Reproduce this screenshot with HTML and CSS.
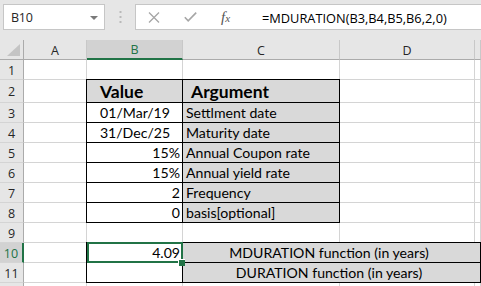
FILE: index.html
```html
<!DOCTYPE html>
<html>
<head>
<meta charset="utf-8">
<link rel="stylesheet" href="styles.css">
</head>
<body>
<div class="fbar">
  <div class="namebox">
    <span class="nb-text">B10</span>
    <svg class="nb-arrow" width="8" height="4" viewBox="0 0 8 4"><path d="M0 0H8L4 4Z" fill="#7a7a7a"/></svg>
  </div>
  <div class="dots">
    <svg width="3" height="12" viewBox="0 0 3 12"><rect x="0.5" y="0" width="2" height="2" fill="#b9b9b9"/><rect x="0.5" y="5" width="2" height="2" fill="#b9b9b9"/><rect x="0.5" y="10" width="2" height="2" fill="#b9b9b9"/></svg>
  </div>
  <div class="formula">
    <div class="ficons">
      <svg class="ic-x" width="12" height="11" viewBox="0 0 12 11"><path d="M1 0.5L11 10.5M11 0.5L1 10.5" stroke="#a6a6a6" stroke-width="1.3" fill="none"/></svg>
      <svg class="ic-check" width="13" height="10" viewBox="0 0 13 10"><path d="M0.8 5.2L4.2 8.8L12.2 0.6" stroke="#a6a6a6" stroke-width="1.6" fill="none"/></svg>
      <span class="ic-fx"><i>f</i><i class="fx-x">x</i></span>
    </div>
    <div class="ftext">=MDURATION(B3,B4,B5,B6,2,0)</div>
  </div>
</div>
<div class="sheet">
  <div class="ch corner"><svg width="13" height="12" viewBox="0 0 13 12"><path d="M13 0V12H0Z" fill="#c4c4c4"/></svg></div>
  <div class="ch">A</div>
  <div class="ch chsel">B</div>
  <div class="ch">C</div>
  <div class="ch">D</div>
  <div class="ch"></div>

  <div class="rh">1</div><div class="c"></div><div class="c"></div><div class="c"></div><div class="c"></div><div class="c"></div>

  <div class="rh">2</div><div class="c"></div>
  <div class="c t g hd hv">Value</div>
  <div class="c t g hd ha">Argument</div>
  <div class="c"></div><div class="c"></div>

  <div class="rh">3</div><div class="c"></div>
  <div class="c t ctr">01/Mar/19</div>
  <div class="c t g lft">Settlment date</div>
  <div class="c"></div><div class="c"></div>

  <div class="rh">4</div><div class="c"></div>
  <div class="c t ctr">31/Dec/25</div>
  <div class="c t g lft">Maturity date</div>
  <div class="c"></div><div class="c"></div>

  <div class="rh">5</div><div class="c"></div>
  <div class="c t rgt">15%</div>
  <div class="c t g lft">Annual Coupon rate</div>
  <div class="c"></div><div class="c"></div>

  <div class="rh">6</div><div class="c"></div>
  <div class="c t rgt">15%</div>
  <div class="c t g lft">Annual yield rate</div>
  <div class="c"></div><div class="c"></div>

  <div class="rh">7</div><div class="c"></div>
  <div class="c t rgt">2</div>
  <div class="c t g lft">Frequency</div>
  <div class="c"></div><div class="c"></div>

  <div class="rh">8</div><div class="c"></div>
  <div class="c t rgt">0</div>
  <div class="c t g lft">basis[optional]</div>
  <div class="c"></div><div class="c"></div>

  <div class="rh">9</div><div class="c"></div><div class="c"></div><div class="c"></div><div class="c"></div><div class="c"></div>

  <div class="rh rhsel">10</div><div class="c"></div>
  <div class="c t rgt sel">4.09</div>
  <div class="c t g ctr span3">MDURATION function (in years)</div>

  <div class="rh">11</div><div class="c"></div>
  <div class="c t"></div>
  <div class="c t g ctr span3">DURATION function (in years)</div>

  <div class="rh lr"></div><div class="c lr"></div><div class="c lr"></div><div class="c lr"></div><div class="c lr"></div><div class="c lr"></div>
</div>
</body>
</html>
```
FILE: styles.css
```css
* { box-sizing: border-box; }
html, body { margin: 0; padding: 0; }
body {
  width: 481px;
  height: 286px;
  overflow: hidden;
  background: #fff;
  font-family: "Open Sans", "Noto Sans", sans-serif;
}
.fbar {
  height: 40px;
  background: #e6e6e6;
  display: flex;
  align-items: flex-start;
  padding: 4px 0 0 3px;
}
.namebox {
  width: 102px;
  height: 26px;
  background: #fff;
  border: 1px solid #c6c6c6;
  display: flex;
  align-items: center;
  justify-content: space-between;
  padding: 0 6px 0 7px;
}
.nb-text {
  font-size: 12.5px;
  color: #262626;
  letter-spacing: -0.2px;
}
.nb-arrow { margin-top: 1px; }
.dots {
  width: 30px;
  height: 26px;
  display: flex;
  align-items: center;
  justify-content: center;
}
.formula {
  flex: 1;
  height: 26px;
  background: #fff;
  border: 1px solid #c6c6c6;
  border-right: none;
  display: flex;
  align-items: center;
}
.ficons {
  display: flex;
  align-items: center;
  padding-left: 12px;
  width: 118px;
}
.ic-x { margin-right: 24px; }
.ic-check { margin-right: 24px; }
.ic-fx {
  font-family: "Liberation Serif", serif;
  font-size: 15px;
  color: #555;
  line-height: 1;
}
.fx-x { font-size: 11px; }
.ftext {
  font-size: 12.8px;
  color: #000;
  padding-left: 8px;
  padding-top: 1px;
}
.sheet {
  display: grid;
  grid-template-columns: 24px 63px 96px 157px 135px 6px;
  grid-template-rows: 20px 20px 23px repeat(9, 20px) 1fr;
  height: 246px;
  overflow: hidden;
}
.ch, .rh {
  background: #e6e6e6;
  color: #262626;
  font-size: 12.5px;
  display: flex;
  align-items: center;
  justify-content: center;
}
.ch {
  border-right: 1px solid #c8c8c8;
  border-bottom: 1px solid #ababab;
  padding-top: 1px;
}
.corner {
  border-right: 1px solid #ababab;
  justify-content: flex-end;
  align-items: flex-end;
  padding: 0 3px 3px 0;
}
.chsel {
  background: #d2d2d2;
  color: #217346;
  border-bottom: 2px solid #217346;
}
.rh {
  border-right: 1px solid #ababab;
  border-bottom: 1px solid #d4d4d4;
  padding-top: 1px;
}
.rhsel {
  background: #d2d2d2;
  color: #217346;
  border-right: 2px solid #217346;
}
.c {
  border-right: 1px solid #d4d4d4;
  border-bottom: 1px solid #d4d4d4;
  font-family: "Lato", "Open Sans", sans-serif;
  font-size: 14.1px;
  color: #000;
  display: flex;
  align-items: flex-end;
  padding: 0 2px 1px 3px;
  white-space: nowrap;
  overflow: visible;
}
.lr { border-bottom: none; padding: 0; }
.t {
  margin: -1px 0 0 -1px;
  border: 1px solid #000;
}
.g { background: #d9d9d9; }
.hd {
  font-weight: bold;
  font-size: 17.5px;
  padding-bottom: 0;
}
.hv { padding-left: 13px; }
.ha { padding-left: 8px; }
.ctr { justify-content: center; }
.lft { justify-content: flex-start; }
.rgt { justify-content: flex-end; }
.span3 { grid-column: span 3; padding-right: 8px; }
.sel { position: relative; }
.sel::after {
  content: "";
  position: absolute;
  top: -1px;
  left: 0;
  right: -1px;
  bottom: -1px;
  border: 2px solid #217346;
}
.sel::before {
  content: "";
  position: absolute;
  right: -3px;
  bottom: -4px;
  width: 6px;
  height: 6px;
  background: #217346;
  border-top: 1px solid #fff;
  border-left: 1px solid #fff;
  z-index: 2;
}
```
